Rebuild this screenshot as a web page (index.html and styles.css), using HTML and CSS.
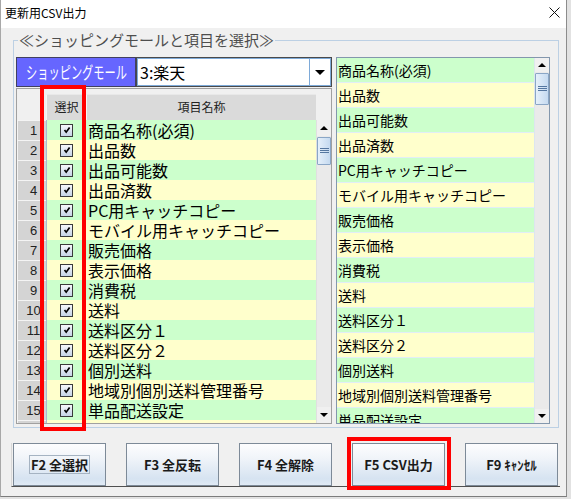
FILE: index.html
```html
<!DOCTYPE html>
<html lang="ja">
<head>
<meta charset="utf-8">
<title>更新用CSV出力</title>
<link rel="stylesheet" href="styles.css">
</head>
<body>
<div class="window">
  <div class="titlebar">
    <span class="title">更新用CSV出力</span>
    <svg class="close" width="11" height="11" viewBox="0 0 11 11"><path d="M0.5 0.5 L10.5 10.5 M10.5 0.5 L0.5 10.5" stroke="#111" stroke-width="1" fill="none"/></svg>
  </div>
  <div class="client">
    <fieldset class="group">
      <legend>≪ショッピングモールと項目を選択≫</legend>
      <div class="group-body">
        <div class="left-col">
          <div class="mall-row">
            <div class="mall-label"><span class="mall-text">ショッピングモール</span></div>
            <div class="combo">
              <span class="combo-text">3:楽天</span>
              <span class="combo-btn"><span class="tri-down big"></span></span>
            </div>
          </div>
          <div class="grid">
            <div class="gh corner"></div>
            <div class="gh"><span class="gh-cell">選択</span></div>
            <div class="gh"><span class="gh-cell">項目名称</span></div>
            <div class="gh blank"></div>
            <div class="rows">
              <div class="row g"><span class="num">1</span><span class="chk"><span class="cb"><svg width="10" height="10" viewBox="0 0 10 10"><path d="M2.5 5 L4.2 7.2 L7.6 2.6" stroke="#000" stroke-width="1.7" fill="none"/></svg></span></span><span class="name">商品名称(必須)</span></div>
              <div class="row y"><span class="num">2</span><span class="chk"><span class="cb"><svg width="10" height="10" viewBox="0 0 10 10"><path d="M2.5 5 L4.2 7.2 L7.6 2.6" stroke="#000" stroke-width="1.7" fill="none"/></svg></span></span><span class="name">出品数</span></div>
              <div class="row g"><span class="num">3</span><span class="chk"><span class="cb"><svg width="10" height="10" viewBox="0 0 10 10"><path d="M2.5 5 L4.2 7.2 L7.6 2.6" stroke="#000" stroke-width="1.7" fill="none"/></svg></span></span><span class="name">出品可能数</span></div>
              <div class="row y"><span class="num">4</span><span class="chk"><span class="cb"><svg width="10" height="10" viewBox="0 0 10 10"><path d="M2.5 5 L4.2 7.2 L7.6 2.6" stroke="#000" stroke-width="1.7" fill="none"/></svg></span></span><span class="name">出品済数</span></div>
              <div class="row g"><span class="num">5</span><span class="chk"><span class="cb"><svg width="10" height="10" viewBox="0 0 10 10"><path d="M2.5 5 L4.2 7.2 L7.6 2.6" stroke="#000" stroke-width="1.7" fill="none"/></svg></span></span><span class="name">PC用キャッチコピー</span></div>
              <div class="row y"><span class="num">6</span><span class="chk"><span class="cb"><svg width="10" height="10" viewBox="0 0 10 10"><path d="M2.5 5 L4.2 7.2 L7.6 2.6" stroke="#000" stroke-width="1.7" fill="none"/></svg></span></span><span class="name">モバイル用キャッチコピー</span></div>
              <div class="row g"><span class="num">7</span><span class="chk"><span class="cb"><svg width="10" height="10" viewBox="0 0 10 10"><path d="M2.5 5 L4.2 7.2 L7.6 2.6" stroke="#000" stroke-width="1.7" fill="none"/></svg></span></span><span class="name">販売価格</span></div>
              <div class="row y"><span class="num">8</span><span class="chk"><span class="cb"><svg width="10" height="10" viewBox="0 0 10 10"><path d="M2.5 5 L4.2 7.2 L7.6 2.6" stroke="#000" stroke-width="1.7" fill="none"/></svg></span></span><span class="name">表示価格</span></div>
              <div class="row g"><span class="num">9</span><span class="chk"><span class="cb"><svg width="10" height="10" viewBox="0 0 10 10"><path d="M2.5 5 L4.2 7.2 L7.6 2.6" stroke="#000" stroke-width="1.7" fill="none"/></svg></span></span><span class="name">消費税</span></div>
              <div class="row y"><span class="num">10</span><span class="chk"><span class="cb"><svg width="10" height="10" viewBox="0 0 10 10"><path d="M2.5 5 L4.2 7.2 L7.6 2.6" stroke="#000" stroke-width="1.7" fill="none"/></svg></span></span><span class="name">送料</span></div>
              <div class="row g"><span class="num">11</span><span class="chk"><span class="cb"><svg width="10" height="10" viewBox="0 0 10 10"><path d="M2.5 5 L4.2 7.2 L7.6 2.6" stroke="#000" stroke-width="1.7" fill="none"/></svg></span></span><span class="name">送料区分１</span></div>
              <div class="row y"><span class="num">12</span><span class="chk"><span class="cb"><svg width="10" height="10" viewBox="0 0 10 10"><path d="M2.5 5 L4.2 7.2 L7.6 2.6" stroke="#000" stroke-width="1.7" fill="none"/></svg></span></span><span class="name">送料区分２</span></div>
              <div class="row g"><span class="num">13</span><span class="chk"><span class="cb"><svg width="10" height="10" viewBox="0 0 10 10"><path d="M2.5 5 L4.2 7.2 L7.6 2.6" stroke="#000" stroke-width="1.7" fill="none"/></svg></span></span><span class="name">個別送料</span></div>
              <div class="row y"><span class="num">14</span><span class="chk"><span class="cb"><svg width="10" height="10" viewBox="0 0 10 10"><path d="M2.5 5 L4.2 7.2 L7.6 2.6" stroke="#000" stroke-width="1.7" fill="none"/></svg></span></span><span class="name">地域別個別送料管理番号</span></div>
              <div class="row g"><span class="num">15</span><span class="chk"><span class="cb"><svg width="10" height="10" viewBox="0 0 10 10"><path d="M2.5 5 L4.2 7.2 L7.6 2.6" stroke="#000" stroke-width="1.7" fill="none"/></svg></span></span><span class="name">単品配送設定</span></div>
              <div class="row y"><span class="num">16</span><span class="chk"><span class="cb"><svg width="10" height="10" viewBox="0 0 10 10"><path d="M2.5 5 L4.2 7.2 L7.6 2.6" stroke="#000" stroke-width="1.7" fill="none"/></svg></span></span><span class="name">送料無料設定</span></div>
            </div>
            <div class="vscroll">
              <span class="sb-btn"><span class="tri-up"></span></span>
              <span class="sb-thumb t-left"><svg width="9" height="6" viewBox="0 0 9 6"><path d="M0 0.5H9M0 2.5H9M0 4.5H9" stroke="#5577a0" stroke-width="1"/></svg></span>
              <span class="sb-track"></span>
              <span class="sb-btn"><span class="tri-down"></span></span>
            </div>
          </div>
        </div>
        <div class="list">
          <div class="items">
            <div class="item g">商品名称(必須)</div>
            <div class="item y">出品数</div>
            <div class="item g">出品可能数</div>
            <div class="item y">出品済数</div>
            <div class="item g">PC用キャッチコピー</div>
            <div class="item y">モバイル用キャッチコピー</div>
            <div class="item g">販売価格</div>
            <div class="item y">表示価格</div>
            <div class="item g">消費税</div>
            <div class="item y">送料</div>
            <div class="item g">送料区分１</div>
            <div class="item y">送料区分２</div>
            <div class="item g">個別送料</div>
            <div class="item y">地域別個別送料管理番号</div>
            <div class="item g">単品配送設定</div>
          </div>
          <div class="vscroll">
            <span class="sb-btn"><span class="tri-up"></span></span>
            <span class="sb-thumb t-right"><svg width="9" height="6" viewBox="0 0 9 6"><path d="M0 0.5H9M0 2.5H9M0 4.5H9" stroke="#5577a0" stroke-width="1"/></svg></span>
            <span class="sb-track"></span>
            <span class="sb-btn"><span class="tri-down"></span></span>
          </div>
        </div>
      </div>
    </fieldset>
    <div class="buttons">
      <button class="btn"><span class="focus">F2 全選択</span></button>
      <button class="btn">F3 全反転</button>
      <button class="btn">F4 全解除</button>
      <button class="btn">F5 CSV出力</button>
      <button class="btn">F9 ｷｬﾝｾﾙ</button>
    </div>
  </div>
</div>
<div class="mark mark-col"></div>
<div class="mark mark-btn"></div>
</body>
</html>
```

FILE: styles.css
```css
* { box-sizing: border-box; }
html, body { margin: 0; padding: 0; }
body {
  width: 571px;
  height: 499px;
  overflow: hidden;
  position: relative;
  background: #e2e2e2;
  font-family: "Noto Sans CJK JP", "Noto Sans", sans-serif;
  color: #000;
}
.window {
  width: 567px;
  height: 497px;
  background: #f0f0f0;
  border-left: 1px solid #a8a8a8;
  border-right: 1px solid #8c8c8c;
  border-bottom: 1px solid #7c7c7c;
  display: flex;
  flex-direction: column;
}
.titlebar {
  height: 28px;
  flex: none;
  background: #fff;
  display: flex;
  align-items: center;
  justify-content: space-between;
  padding: 0 6px 0 4px;
}
.title { font-size: 12px; line-height: 14px; margin-top: -2px; }
.close { margin-top: -4px; }
.client { flex: 1; display: flex; flex-direction: column; padding-left: 12px; }

.group {
  margin: 3px 0 0 0;
  width: 546px;
  border: 1px solid #bcd0e4;
  padding: 8px 8px 3px 2px;
  min-inline-size: 0;
}
.group legend {
  font-size: 15px;
  line-height: 18px;
  color: #4e4e4e;
  padding: 0 1px;
  margin-left: 2px;
}
.group-body { display: flex; gap: 4px; height: 367px; }
.left-col { width: 316px; display: flex; flex-direction: column; gap: 1px; }

.mall-row { display: flex; height: 30px; }
.mall-label {
  width: 120px;
  background: #6666ff;
  border: 1px solid #404060;
  color: #fff;
  padding-left: 9px;
  white-space: nowrap;
  overflow: hidden;
  display: flex;
  align-items: center;
}
.mall-text {
  display: inline-block;
  font-size: 17px;
  line-height: 20px;
  transform: scaleX(0.66);
  transform-origin: left center;
}
.combo {
  flex: 1;
  display: flex;
  background: #fff;
  border: 1px solid #4a4a4a;
  box-shadow: inset 0 0 0 1px #7eaad8;
}
.combo-text { flex: 1; font-size: 16px; line-height: 28px; padding-left: 3px; }
.combo-btn {
  width: 21px;
  border-left: 1px solid #7eaad8;
  margin: 1px 1px 1px 0;
  display: flex;
  align-items: center;
  justify-content: center;
}

.grid {
  height: 336px;
  border: 1px solid #a0a0a0;
  display: grid;
  grid-template-columns: 29px 40px 230px 15px;
  grid-template-rows: 31px 1fr;
  overflow: hidden;
}
.gh { display: flex; align-items: flex-end; }
.gh-cell {
  flex: 1;
  height: 26px;
  background: #dadada;
  border-left: 1px solid #f6f6f6;
  border-top: 1px solid #e8e8e8;
  font-size: 12px;
  line-height: 24px;
  text-align: center;
  color: #222;
}
.rows { grid-column: 1 / 4; overflow: hidden; }
.row {
  display: grid;
  grid-template-columns: 29px 40px 230px;
  height: 20px;
}
.num {
  background: #d4d4d4;
  border-top: 1px solid #f4f4f4;
  border-left: 1px solid #f4f4f4;
  font-family: "Liberation Sans", Arial, sans-serif;
  font-size: 13px;
  line-height: 19px;
  text-align: center;
  padding-left: 3px;
  color: #222;
}
.chk {
  display: flex;
  align-items: center;
  justify-content: center;
  border-left: 1px solid #a9bccf;
}
.cb {
  width: 13px;
  height: 13px;
  border: 1px solid #3a3a3a;
  background: linear-gradient(#f6f8fb, #c6d3e6);
  display: flex;
  align-items: center;
  justify-content: center;
}
.name {
  font-size: 16px;
  line-height: 20px;
  padding-left: 2px;
  white-space: nowrap;
  overflow: hidden;
}
.g { background: #ccffcc; }
.y { background: #ffffcc; }

.vscroll {
  display: flex;
  flex-direction: column;
  background: #eaeaea;
  border-left: 1px solid #e0e0e0;
}
.sb-btn {
  height: 16px;
  flex: none;
  display: flex;
  align-items: center;
  justify-content: center;
  background: #f0f0f0;
}
.sb-thumb {
  flex: none;
  margin: 1px 0 0 0;
  border: 1px solid #8aa6c6;
  border-radius: 1px;
  background: linear-gradient(90deg, #e6f0fa, #c5daf0);
  display: flex;
  align-items: center;
  justify-content: center;
}
.t-left { height: 28px; }
.t-right { height: 32px; }
.sb-track { flex: 1; }

.tri-up, .tri-down {
  width: 0; height: 0;
  border-left: 4px solid transparent;
  border-right: 4px solid transparent;
}
.tri-up { border-bottom: 4px solid #000; }
.tri-down { border-top: 4px solid #000; }
.tri-down.big { border-left-width: 5px; border-right-width: 5px; border-top-width: 5px; }

.list {
  width: 214px;
  border: 1px solid #8397ad;
  display: flex;
  background: #fff;
}
.items { width: 197px; overflow: hidden; }
.item {
  height: 25px;
  font-size: 14px;
  line-height: 24px;
  padding-left: 1px;
  border-bottom: 1px solid #e2eef6;
  white-space: nowrap;
}
.list .vscroll { width: 15px; border-left: 1px solid #dde6ef; }
.list .sb-btn { height: 14px; }

.buttons {
  margin: 15px 0 0 -2px;
  width: 549px;
  display: flex;
  gap: 20px;
  padding-left: 1px;
  border-left: 1px solid #d8d8d8;
  border-bottom: 1px solid #505050;
}
.btn {
  width: 93px;
  height: 43px;
  border: 1px solid #7d8a98;
  border-radius: 0;
  background: linear-gradient(#fdfdfe 0%, #f0f4f9 35%, #d6e3f1 85%, #e0eaf5 100%);
  font-family: "Noto Sans CJK JP", "Noto Sans", sans-serif;
  font-weight: bold;
  font-size: 13px;
  color: #1a1a1a;
  padding: 0;
  display: flex;
  align-items: center;
  justify-content: center;
}
.focus {
  border: 1px solid #a5b3c2;
  padding: 0 1px;
  line-height: 17px;
}

.mark {
  position: absolute;
  border: 4px solid #ff0000;
}
.mark-col { left: 40px; top: 85px; width: 46px; height: 346px; }
.mark-btn { left: 347px; top: 437px; width: 104px; height: 53px; }
```
